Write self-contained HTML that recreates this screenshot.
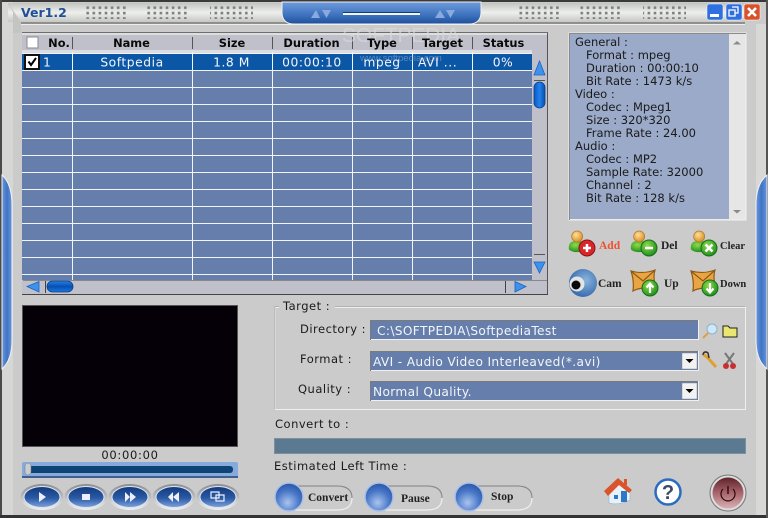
<!DOCTYPE html>
<html><head><meta charset="utf-8"><style>
html,body{margin:0;padding:0;background:#cbcbcb;width:768px;height:518px;overflow:hidden}
svg{display:block}
.t{font-family:"DejaVu Sans",sans-serif;font-size:11.5px;fill:#1a1a1a}
.l{font-family:"DejaVu Sans",sans-serif;font-size:11.5px;fill:#1a1a1a;letter-spacing:.5px}
.w{font-family:"DejaVu Sans",sans-serif;font-size:12.3px;fill:#f2f5fa;letter-spacing:.55px}
.i{font-family:"DejaVu Sans",sans-serif;font-size:12.2px;fill:#f2f5fa;letter-spacing:.35px}
.h{font-family:"DejaVu Sans",sans-serif;font-size:11.4px;font-weight:bold;fill:#0a0a0a;text-anchor:middle}
.s{font-family:"Liberation Serif",serif;font-size:11.5px;font-weight:bold;fill:#222}
.c{text-anchor:middle}
</style></head><body>
<svg width="768" height="518" viewBox="0 0 768 518" xmlns="http://www.w3.org/2000/svg">
<defs>
<linearGradient id="tb" x1="0" y1="0" x2="0" y2="1"><stop offset="0" stop-color="#c2c4c0"/><stop offset=".5" stop-color="#eeefec"/><stop offset="1" stop-color="#c6c8c4"/></linearGradient>
<linearGradient id="bl" x1="0" y1="0" x2="0" y2="1"><stop offset="0" stop-color="#6f9bdc"/><stop offset=".6" stop-color="#3d72bd"/><stop offset="1" stop-color="#1f4f9c"/></linearGradient>
<linearGradient id="side" x1="0" y1="0" x2="1" y2="0"><stop offset="0" stop-color="#6b97dc"/><stop offset=".5" stop-color="#3f74c4"/><stop offset="1" stop-color="#6a96dc"/></linearGradient>
<radialGradient id="orb" cx=".45" cy=".7" r=".75"><stop offset="0" stop-color="#a9c4ee"/><stop offset=".55" stop-color="#4a78c8"/><stop offset="1" stop-color="#24509f"/></radialGradient>
<linearGradient id="pb" x1="0" y1="0" x2="0" y2="1"><stop offset="0" stop-color="#123a7c"/><stop offset=".55" stop-color="#2a5aa4"/><stop offset="1" stop-color="#7ea4dc"/></linearGradient>
<linearGradient id="ring" x1="0" y1="0" x2="0" y2="1"><stop offset="0" stop-color="#8a8c90"/><stop offset="1" stop-color="#f0f0f2"/></linearGradient>
<linearGradient id="pow" x1="0" y1="0" x2="0" y2="1"><stop offset="0" stop-color="#5e2228"/><stop offset=".5" stop-color="#a8656c"/><stop offset="1" stop-color="#d9b0b4"/></linearGradient>
<linearGradient id="vbar" x1="0" y1="0" x2="1" y2="0"><stop offset="0" stop-color="#0a58c4"/><stop offset=".5" stop-color="#1f82ea"/><stop offset="1" stop-color="#0a4fb0"/></linearGradient>
<linearGradient id="hbar" x1="0" y1="0" x2="0" y2="1"><stop offset="0" stop-color="#1f82ea"/><stop offset=".5" stop-color="#0a4fb0"/><stop offset="1" stop-color="#1a78e0"/></linearGradient>
<pattern id="dots" width="6.1" height="5.4" patternUnits="userSpaceOnUse"><rect x="1" y="1" width="2.600" height="2.600" fill="#7d7f7d"/></pattern>
<radialGradient id="grn" cx=".4" cy=".35" r=".7"><stop offset="0" stop-color="#8fdc4a"/><stop offset="1" stop-color="#1b8a1c"/></radialGradient>
<radialGradient id="org" cx=".4" cy=".35" r=".7"><stop offset="0" stop-color="#ffe09a"/><stop offset="1" stop-color="#d48a20"/></radialGradient>
<radialGradient id="cam" cx=".6" cy=".4" r=".7"><stop offset="0" stop-color="#8ab4dc"/><stop offset="1" stop-color="#2a62a8"/></radialGradient>
<symbol id="person" viewBox="0 0 24 24" overflow="visible">
<path d="M1 20 C0 13 4 11 8 11 L13 11 C17 11 19 14 19 20 C14 24 5 24 1 20Z" fill="url(#grn)"/>
<circle cx="10" cy="6" r="6" fill="url(#org)" stroke="#b87a28" stroke-width=".8"/>
</symbol>
<symbol id="mail" viewBox="0 0 26 26" overflow="visible">
<path d="M1 3 C8 5 17 5 25 2 C23 8 24 14 26 21 C18 19 8 20 3 23 C4 15 3 9 1 3Z" fill="#e9a543" stroke="#8f5a14" stroke-width="1.2"/>
<path d="M2 4 L13 13 L24 3" fill="none" stroke="#8f5a14" stroke-width="1.2"/>
</symbol>
</defs>

<rect width="768" height="518" fill="#cbcbcb"/>
<rect x="0" y="0" width="768" height="2" fill="#3a3a3a"/>
<rect x="0" y="0" width="2" height="518" fill="#4a4a4a"/>
<rect x="0" y="515" width="768" height="3" fill="#333"/>
<rect x="766" y="0" width="2" height="518" fill="#555"/>
<rect x="2" y="2" width="11" height="513" fill="#d6d7d5"/>
<rect x="756" y="24" width="10" height="491" fill="#d8d9d7"/>

<!-- title band -->
<rect x="8" y="3" width="750" height="19" fill="url(#tb)"/>
<rect x="21" y="22" width="724" height="2" fill="#8f908e"/>
<rect x="21" y="24" width="724" height="1" fill="#eee"/>
<path d="M8 3 L21 22 L21 33 L13 33 L13 12Z" fill="#c4c5c3"/>
<rect x="84" y="5" width="43" height="14" fill="url(#dots)"/>
<rect x="146" y="5" width="43" height="14" fill="url(#dots)"/>
<rect x="210" y="5" width="43" height="14" fill="url(#dots)"/>
<rect x="517" y="5" width="43" height="14" fill="url(#dots)"/>
<rect x="579" y="5" width="43" height="14" fill="url(#dots)"/>
<rect x="643" y="5" width="43" height="14" fill="url(#dots)"/>
<text x="21" y="17" font-family="DejaVu Sans,sans-serif" font-size="12.5" font-weight="bold" fill="#1f4f96">Ver1.2</text>

<!-- top centre tab -->
<path d="M282 2 H481 V12 Q481 24 469 24 H294 Q282 24 282 12Z" fill="url(#bl)" stroke="#eef0ee" stroke-width="1"/>
<rect x="343" y="13" width="77" height="2" fill="#f2f5fa"/>
<rect x="343" y="12" width="77" height="1" fill="#173a70"/>
<path d="M311 18 L316 10 L320 18Z M322 10 H331 L326.500 18Z M435 18 L440 10 L445 18Z M446 10 H455 L450.500 18Z" fill="#8aa9dc"/>

<!-- window buttons -->
<rect x="707" y="4" width="16" height="16" rx="2" fill="#2f6fe0" stroke="#fff" stroke-width=".5"/>
<rect x="710" y="14" width="9" height="3" fill="#fff"/>
<rect x="726" y="4" width="16" height="16" rx="2" fill="#2f6fe0" stroke="#fff" stroke-width=".5"/>
<path d="M729 10 h6 v6 h-6z M732 7 h6 v6 h-3" fill="none" stroke="#fff" stroke-width="1.300"/>
<rect x="744" y="4" width="16" height="16" rx="2" fill="#d9532a" stroke="#fff" stroke-width=".5"/>
<path d="M748 8 L756 16 M756 8 L748 16" stroke="#fff" stroke-width="2.600"/>

<!-- side bumps -->
<path d="M2 175 Q12 184 12 205 V340 Q12 360 2 369Z" fill="url(#side)" stroke="#f2f2f2" stroke-width="1"/>
<path d="M767 175 Q756 184 756 205 V340 Q756 360 767 369Z" fill="url(#side)" stroke="#f2f2f2" stroke-width="1"/>

<!-- table panel -->
<rect x="22" y="33" width="526" height="262" fill="#c0c0ca"/>
<rect x="22" y="32" width="526" height="1" fill="#6e6e6e"/>
<rect x="22" y="33" width="526" height="2" fill="#dedede"/>
<rect x="547" y="33" width="1" height="262" fill="#555"/>
<rect x="22" y="294" width="526" height="1" fill="#444"/>
<rect x="22" y="50" width="510" height="3" fill="#dcdce4"/>
<rect x="22" y="53" width="510" height="227" fill="#667eab"/>
<rect x="22" y="54" width="510" height="16" fill="#0b57a6"/>
<g fill="#f2f4f8">
<rect x="22" y="53" width="510" height="1"/>
<rect x="22" y="70" width="510" height="1"/><rect x="22" y="87" width="510" height="1"/>
<rect x="22" y="104" width="510" height="1"/><rect x="22" y="121" width="510" height="1"/>
<rect x="22" y="138" width="510" height="1"/><rect x="22" y="155" width="510" height="1"/>
<rect x="22" y="172" width="510" height="1"/><rect x="22" y="189" width="510" height="1"/>
<rect x="22" y="206" width="510" height="1"/><rect x="22" y="223" width="510" height="1"/>
<rect x="22" y="240" width="510" height="1"/><rect x="22" y="257" width="510" height="1"/>
<rect x="22" y="274" width="510" height="1"/>
<rect x="72" y="52" width="1" height="228"/><rect x="192" y="52" width="1" height="228"/>
<rect x="272" y="52" width="1" height="228"/><rect x="352" y="52" width="1" height="228"/>
<rect x="412" y="52" width="1" height="228"/><rect x="472" y="52" width="1" height="228"/>
</g>
<g fill="#555">
<rect x="72" y="37" width="1" height="12"/><rect x="192" y="37" width="1" height="12"/>
<rect x="272" y="37" width="1" height="12"/><rect x="352" y="37" width="1" height="12"/>
<rect x="412" y="37" width="1" height="12"/><rect x="472" y="37" width="1" height="12"/>
</g>
<rect x="27" y="37" width="11" height="11" fill="#fff" stroke="#8a8a90"/>
<text x="342" y="42" textLength="118" lengthAdjust="spacingAndGlyphs" font-family="Liberation Sans,sans-serif" font-size="20" fill="#dcdce0" opacity=".6">SOFTPEDIA</text>
<text class="h" x="59" y="47">No.</text>
<text class="h" x="131.500" y="47">Name</text>
<text class="h" x="232" y="47">Size</text>
<text class="h" x="311.500" y="47">Duration</text>
<text class="h" x="382" y="47">Type</text>
<text class="h" x="442.500" y="47">Target</text>
<text class="h" x="503.500" y="47">Status</text>
<rect x="25" y="55" width="14" height="14" fill="#fff" stroke="#111" stroke-width="2"/>
<path d="M28.500 61.500 L31 65 L36 58" fill="none" stroke="#000" stroke-width="2"/>
<text x="360" y="61" font-family="Liberation Sans,sans-serif" font-size="9.500" fill="#8fa4c8" opacity=".6">www.softpedia.com</text>
<text class="w" x="43" y="66.500">1</text>
<text class="w c" x="132" y="66.500">Softpedia</text>
<text class="w c" x="231.500" y="66.500">1.8 M</text>
<text class="w c" x="312" y="66.500">00:00:10</text>
<text class="w c" x="382" y="66.500">mpeg</text>
<text class="w" x="418" y="66.500">AVI ...</text>
<text class="w c" x="503" y="66.500">0%</text>

<!-- v scrollbar -->
<path d="M539.500 61 L545 75 H534Z" fill="#3d93ec" stroke="#1a62c0" stroke-width=".8"/>
<rect x="534" y="80" width="11" height="1" fill="#555"/>
<rect x="534" y="82" width="11" height="26" rx="5.500" fill="url(#vbar)" stroke="#0a3f90" stroke-width=".8"/>
<path d="M534 262 H545 L539.500 273Z" fill="#3d93ec" stroke="#1a62c0" stroke-width=".8"/>
<rect x="534" y="254" width="11" height="1" fill="#555"/>
<!-- h scrollbar -->
<rect x="23" y="280" width="524" height="14" fill="#c0c0ca"/>
<rect x="23" y="280" width="524" height="1" fill="#888"/>
<path d="M27 286.500 L39 281.500 V292Z" fill="#3d93ec" stroke="#1a62c0" stroke-width=".8"/>
<rect x="45" y="281" width="1" height="12" fill="#444"/>
<rect x="47" y="281" width="26" height="11" rx="5.500" fill="url(#hbar)" stroke="#0a3f90" stroke-width=".8"/>
<rect x="505" y="281" width="1" height="12" fill="#444"/>
<path d="M526 286.500 L515 281.500 V292Z" fill="#3d93ec" stroke="#1a62c0" stroke-width=".8"/>

<!-- info panel -->
<rect x="569" y="33" width="177" height="187" fill="#e6e6e6" stroke="#f2f2f2"/>
<path d="M569.500 220 V33.500 H746" fill="none" stroke="#8b8b8b"/>
<rect x="570" y="34" width="159" height="185" fill="#9aaac8"/>
<path d="M733 44.500 L737 41 L741 44.500Z M733 210 L737 213.500 L741 210Z" fill="#8a8a8a"/>
<text class="t" x="575" y="46">General :</text>
<text class="t" x="586" y="59">Format : mpeg</text>
<text class="t" x="586" y="72">Duration : 00:00:10</text>
<text class="t" x="586" y="85">Bit Rate : 1473 k/s</text>
<text class="t" x="575" y="98">Video :</text>
<text class="t" x="586" y="111">Codec : Mpeg1</text>
<text class="t" x="586" y="124">Size : 320*320</text>
<text class="t" x="586" y="137">Frame Rate : 24.00</text>
<text class="t" x="575" y="150">Audio :</text>
<text class="t" x="586" y="163">Codec : MP2</text>
<text class="t" x="586" y="176">Sample Rate: 32000</text>
<text class="t" x="586" y="189">Channel : 2</text>
<text class="t" x="586" y="202">Bit Rate : 128 k/s</text>

<!-- action icons -->
<use href="#person" x="568" y="230" width="22" height="24"/>
<circle cx="587" cy="248" r="8" fill="#d8262a" stroke="#8c1216"/>
<path d="M583 248 h8 M587 244 v8" stroke="#fff" stroke-width="2.500"/>
<text class="s" x="599" y="249" style="fill:#ef5230">Add</text>
<use href="#person" x="630" y="230" width="22" height="24"/>
<circle cx="649" cy="248" r="8" fill="url(#grn)" stroke="#14701a"/>
<path d="M645 248 h8" stroke="#fff" stroke-width="2.500"/>
<text class="s" x="661" y="249">Del</text>
<use href="#person" x="690" y="230" width="22" height="24"/>
<circle cx="709" cy="248" r="8" fill="url(#grn)" stroke="#14701a"/>
<path d="M705.500 244.500 L712.500 251.500 M712.500 244.500 L705.500 251.500" stroke="#fff" stroke-width="2.500"/>
<text class="s" x="720" y="249" style="font-size:10.500px">Clear</text>

<circle cx="583" cy="283" r="14" fill="url(#cam)"/>
<circle cx="577" cy="284" r="7.500" fill="#e4e4e4"/>
<circle cx="576" cy="285" r="4.500" fill="#0a0a0a"/>
<text class="s" x="598" y="287">Cam</text>
<use href="#mail" x="630" y="268" width="26" height="26"/>
<circle cx="650" cy="288" r="8" fill="url(#grn)" stroke="#14701a"/>
<path d="M650 293 V284 M646.500 287.500 L650 283.500 L653.500 287.500" stroke="#fff" stroke-width="2.200" fill="none"/>
<text class="s" x="664" y="287">Up</text>
<use href="#mail" x="690" y="268" width="26" height="26"/>
<circle cx="710" cy="288" r="8" fill="url(#grn)" stroke="#14701a"/>
<path d="M710 283 V292 M706.500 288.500 L710 292.500 L713.500 288.500" stroke="#fff" stroke-width="2.200" fill="none"/>
<text class="s" x="720" y="287" style="font-size:10.500px">Down</text>

<!-- video -->
<rect x="22.500" y="305.500" width="215" height="141" fill="#050008" stroke="#555"/>
<text class="t c" x="130" y="459" style="letter-spacing:.7px">00:00:00</text>
<rect x="22" y="462" width="216" height="16" rx="2" fill="#86aade"/>
<rect x="22" y="476" width="216" height="2" fill="#3f5f8f"/>
<rect x="27" y="466" width="206" height="7" rx="3" fill="#0e4474"/>
<rect x="25" y="463" width="6" height="12" rx="3" fill="#c9cdd2" stroke="#777" stroke-width=".5"/>

<!-- transport -->
<g fill="url(#ring)">
<ellipse cx="42" cy="497" rx="21.500" ry="13"/>
<ellipse cx="86" cy="497" rx="21.500" ry="13"/>
<ellipse cx="130" cy="497" rx="21.500" ry="13"/>
<ellipse cx="174" cy="497" rx="21.500" ry="13"/>
<ellipse cx="218" cy="497" rx="21.500" ry="13"/>
</g>
<g stroke="#dfe6f2" stroke-width="1">
<ellipse cx="42" cy="497" rx="18" ry="10.500" fill="url(#pb)"/>
<ellipse cx="86" cy="497" rx="18" ry="10.500" fill="url(#pb)"/>
<ellipse cx="130" cy="497" rx="18" ry="10.500" fill="url(#pb)"/>
<ellipse cx="174" cy="497" rx="18" ry="10.500" fill="url(#pb)"/>
<ellipse cx="218" cy="497" rx="18" ry="10.500" fill="url(#pb)"/>
</g>
<path d="M39 492 L46 497 L39 502Z" fill="#eef"/>
<rect x="82" y="494" width="8" height="6" fill="#eef"/>
<path d="M125 492 L130 497 L125 502Z M130 492 L136 497 L130 502Z" fill="#eef"/>
<path d="M173 492 L168 497 L173 502Z M179 492 L173 497 L179 502Z" fill="#eef"/>
<path d="M211 492 h8 v6 h-8z M216 495 h8 v6 h-8z" fill="none" stroke="#eef" stroke-width="1.200"/>

<!-- target -->
<path d="M279 307.500 H275.500 V409.500 H745.500 V307.500 H335" fill="none" stroke="#efefef" stroke-width="1"/>
<path d="M279 306.500 H275 V409 M335 306.500 H745" fill="none" stroke="#999" stroke-width=".6"/>
<text class="l" x="283" y="310">Target :</text>
<text class="l" x="300" y="333">Directory :</text>
<text class="l" x="300" y="363">Format :</text>
<text class="l" x="298" y="393">Quality :</text>
<rect x="370.500" y="320.500" width="328" height="19" fill="#667eab" stroke="#f0f0f0"/>
<path d="M370.500 340 V320.500 H698" fill="none" stroke="#7a7a7a"/>
<text class="i" x="377" y="335">C:\SOFTPEDIA\SoftpediaTest</text>
<rect x="370.500" y="351.500" width="328" height="19" fill="#667eab" stroke="#f0f0f0"/>
<path d="M370.500 371 V351.500 H698" fill="none" stroke="#7a7a7a"/>
<text class="i" x="373" y="366">AVI - Audio Video Interleaved(*.avi)</text>
<rect x="682" y="353" width="15" height="16" fill="#f2f2f2" stroke="#888" stroke-width=".5"/>
<path d="M685.500 359 h8 l-4 4z" fill="#000"/>
<rect x="370.500" y="381.500" width="328" height="19" fill="#667eab" stroke="#f0f0f0"/>
<path d="M370.500 401 V381.500 H698" fill="none" stroke="#7a7a7a"/>
<text class="i" x="373" y="396">Normal Quality.</text>
<rect x="682" y="383" width="15" height="16" fill="#f2f2f2" stroke="#888" stroke-width=".5"/>
<path d="M685.500 389 h8 l-4 4z" fill="#000"/>
<!-- dir icons -->
<circle cx="712" cy="329" r="5" fill="#cfe8f8" stroke="#8ab4d0"/>
<path d="M708 333 L703 338" stroke="#e0a040" stroke-width="2"/>
<path d="M723 337 V326 H728 L730 328 H737 V337Z" fill="#e8e870" stroke="#222"/>
<path d="M703 354 L708 358 L716 367" stroke="#e0a030" stroke-width="3" fill="none"/>
<path d="M703 355 C703 352 706 351 708 353 L709 358" stroke="#333" stroke-width="1.500" fill="none"/>
<path d="M725 353 L733 364 M734 353 L726 364" stroke="#777" stroke-width="2"/>
<circle cx="726" cy="366" r="3" fill="#c83030"/><circle cx="733" cy="366" r="3" fill="#c83030"/>

<text class="l" x="275" y="428">Convert to :</text>
<rect x="274.500" y="438.500" width="471" height="15" fill="#5b7a92" stroke="#7e8f9c"/>
<text class="l" x="274" y="470">Estimated Left Time :</text>

<!-- convert buttons -->
<g fill="none" stroke-width="1.200">
<path d="M295 486 H337 Q352 486 352 498 Q352 510 337 510 H295" stroke="#eee"/>
<path d="M295 486 H337 Q352 486 352 498" stroke="#8a8a8a"/>
<path d="M385 486 H427 Q442 486 442 498 Q442 510 427 510 H385" stroke="#eee"/>
<path d="M385 486 H427 Q442 486 442 498" stroke="#8a8a8a"/>
<path d="M475 486 H517 Q532 486 532 498 Q532 510 517 510 H475" stroke="#eee"/>
<path d="M475 486 H517 Q532 486 532 498" stroke="#8a8a8a"/>
</g>
<g stroke="#a8c0e8" stroke-width="1.500">
<circle cx="289" cy="497" r="14" fill="url(#orb)"/>
<circle cx="379" cy="497" r="14" fill="url(#orb)"/>
<circle cx="469" cy="497" r="14" fill="url(#orb)"/>
</g>
<text class="s" x="308" y="501">Convert</text>
<text class="s" x="401" y="502">Pause</text>
<text class="s" x="491" y="500">Stop</text>

<!-- home -->
<path d="M609 492 V503 Q618 506 630 500 V489 L620 484Z" fill="#e8f0f8" stroke="#7ea8d0" stroke-width=".5"/>
<path d="M604 491 L618 478 L632 490 L629 493 L619 485 L608 496Z" fill="#d9542a"/>
<rect x="624" y="479" width="3" height="6" fill="#d9542a"/>
<rect x="621" y="491" width="6" height="11" fill="#2f78c8"/>
<rect x="614" y="495" width="4" height="4" fill="#2f78c8"/>

<!-- help -->
<circle cx="668" cy="492" r="12.500" fill="#fff" stroke="#2a6cc0" stroke-width="2.500"/>
<text x="668" y="499" text-anchor="middle" font-family="Liberation Sans,sans-serif" font-size="20" font-weight="bold" fill="#3b4a68">?</text>

<!-- power -->
<circle cx="728" cy="493" r="18" fill="#dcdcdc" stroke="#777" stroke-width="1"/>
<circle cx="728" cy="493" r="15.500" fill="url(#pow)"/>
<path d="M728 486 V494" stroke="#2a0a0c" stroke-width="1.400"/>
<path d="M723 489 A7 7 0 1 0 733 489" fill="none" stroke="#2a0a0c" stroke-width="1.200"/>
</svg>
</body></html>
